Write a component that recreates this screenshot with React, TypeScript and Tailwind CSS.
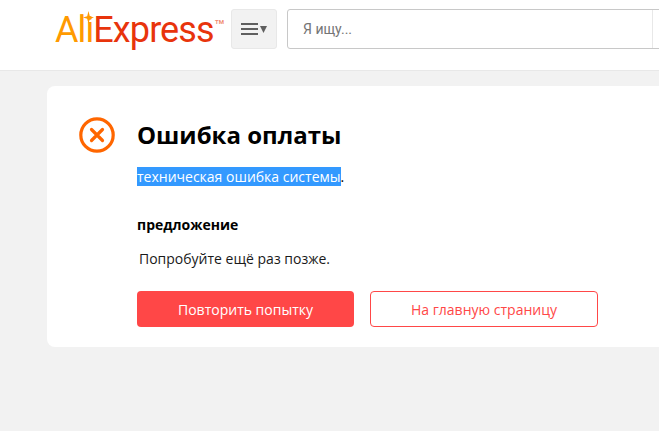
import React from 'react';

const App: React.FC = () => {
    return (
        <div className="w-[659px] h-[431px] overflow-hidden bg-[#f2f2f2] font-['Open_Sans',sans-serif]">
            <header className="h-[71px] bg-white border-b border-[#e8e8e8] flex items-start">
                <div className="w-[231px] pl-[55px] pt-[5px] shrink-0">
                    <div className="relative w-[166px] h-[50px] font-['Roboto',sans-serif] font-normal text-[36px] leading-[50px] tracking-[-0.9px] whitespace-nowrap">
                        <span className="text-[#ff9a00]">Ali</span>
                        <span className="text-[#e8340c]">Express</span>
                        <svg className="absolute left-[28px] top-[6px]" width="11" height="13" viewBox="0 0 11 13">
                            <path d="M5.5 0 L6.8 5.2 L11 6.5 L6.8 7.8 L5.5 13 L4.2 7.8 L0 6.5 L4.2 5.2 Z" fill="#ff9a00" />
                        </svg>
                        <span className="absolute left-[160px] top-[13px] text-[6px] leading-[8px] tracking-normal font-bold text-[#f08a70]">TM</span>
                    </div>
                </div>
                <button className="mt-[9px] w-[46px] h-[40px] bg-[#f2f2f2] border border-[#e8e8e8] rounded-[3px] flex items-center justify-center gap-[2px] shrink-0">
                    <span className="flex flex-col gap-[3px]">
                        <span className="block w-[17px] h-[2px] bg-[#5f5f5f]" />
                        <span className="block w-[17px] h-[2px] bg-[#5f5f5f]" />
                        <span className="block w-[17px] h-[2px] bg-[#5f5f5f]" />
                    </span>
                    <svg width="7" height="7" viewBox="0 0 7 7">
                        <path d="M0 0 H7 L3.5 7 Z" fill="#5f5f5f" />
                    </svg>
                </button>
                <div className="mt-[9px] ml-[10px] w-[420px] h-[40px] bg-white border border-[#c8c8c8] rounded-l-[3px] flex items-center shrink-0">
                    <span className="w-[364px] pl-[15px] text-[14px] text-[#757575] font-['Roboto',sans-serif]">Я ищу...</span>
                    <span className="h-full border-l border-[#e8e8e8]" />
                </div>
            </header>
            <main className="mt-[15px] ml-[47px] w-[700px] h-[261px] bg-white rounded-[8px] flex pt-[32px] pl-[32px]">
                <svg className="shrink-0 mt-[-1px]" width="36" height="36" viewBox="0 0 36 36" fill="none">
                    <circle cx="18" cy="18" r="16.2" stroke="#ff6600" strokeWidth="3.2" />
                    <path d="M12.5 12.5 L23.5 23.5 M23.5 12.5 L12.5 23.5" stroke="#ff6600" strokeWidth="3.2" strokeLinecap="round" />
                </svg>
                <div className="ml-[22px] flex flex-col items-start">
                    <h1 className="text-[24px] leading-[30px] font-bold text-black mt-[2px]">Ошибка оплаты</h1>
                    <p className="mt-[17px] text-[14px] leading-[19px] text-black">
                        <span className="bg-[#3399ff] text-white">техническая ошибка системы</span>.
                    </p>
                    <h2 className="mt-[29px] text-[14px] leading-[19px] font-bold text-black">предложение</h2>
                    <p className="mt-[15px] ml-[2px] text-[14px] leading-[19px] text-[#1a1a1a]">Попробуйте ещё раз позже.</p>
                    <div className="mt-[23px] flex gap-[16px]">
                        <button className="w-[217px] h-[36px] bg-[#ff4747] rounded-[4px] text-[14px] text-white">Повторить попытку</button>
                        <button className="w-[228px] h-[36px] bg-white border border-[#ff4747] rounded-[4px] text-[14px] text-[#ff4747]">На главную страницу</button>
                    </div>
                </div>
            </main>
        </div>
    );
};

export default App;
